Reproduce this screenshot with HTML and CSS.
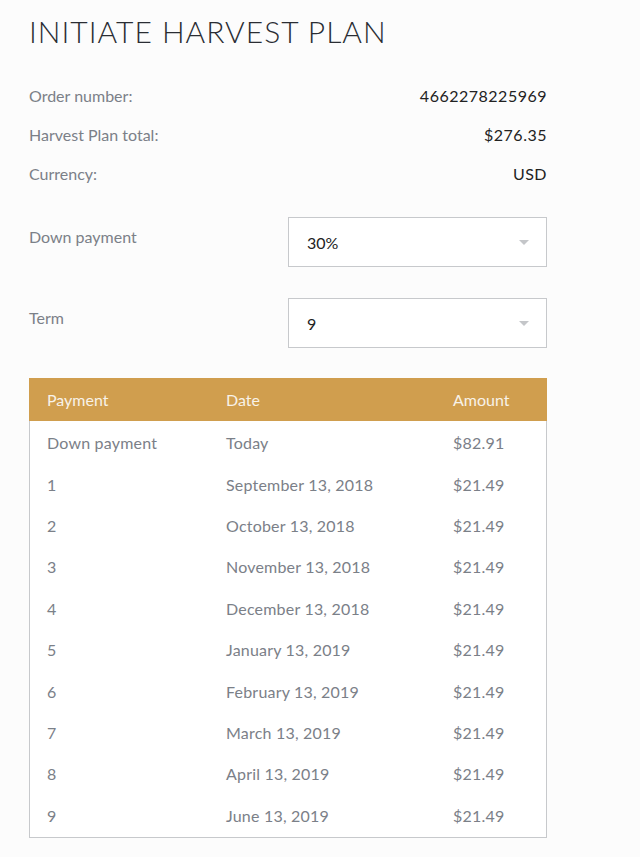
FILE: index.html
```html
<!DOCTYPE html>
<html>
<head>
<meta charset="utf-8">
<link rel="stylesheet" href="styles.css">
</head>
<body>
<div class="page">
  <h1 class="title">INITIATE HARVEST PLAN</h1>
  <div class="info">
    <div class="info-row"><span class="label">Order number:</span><span class="value">4662278225969</span></div>
    <div class="info-row"><span class="label">Harvest Plan total:</span><span class="value">$276.35</span></div>
    <div class="info-row"><span class="label">Currency:</span><span class="value">USD</span></div>
  </div>
  <div class="field first">
    <span class="field-label">Down payment</span>
    <div class="select"><span>30%</span><span class="caret"></span></div>
  </div>
  <div class="field">
    <span class="field-label">Term</span>
    <div class="select"><span>9</span><span class="caret"></span></div>
  </div>
  <div class="table">
    <div class="thead">
      <span class="c1">Payment</span><span class="c2">Date</span><span class="c3">Amount</span>
    </div>
    <div class="tbody">
      <div class="tr"><span class="c1">Down payment</span><span class="c2">Today</span><span class="c3">$82.91</span></div>
      <div class="tr"><span class="c1">1</span><span class="c2">September 13, 2018</span><span class="c3">$21.49</span></div>
      <div class="tr"><span class="c1">2</span><span class="c2">October 13, 2018</span><span class="c3">$21.49</span></div>
      <div class="tr"><span class="c1">3</span><span class="c2">November 13, 2018</span><span class="c3">$21.49</span></div>
      <div class="tr"><span class="c1">4</span><span class="c2">December 13, 2018</span><span class="c3">$21.49</span></div>
      <div class="tr"><span class="c1">5</span><span class="c2">January 13, 2019</span><span class="c3">$21.49</span></div>
      <div class="tr"><span class="c1">6</span><span class="c2">February 13, 2019</span><span class="c3">$21.49</span></div>
      <div class="tr"><span class="c1">7</span><span class="c2">March 13, 2019</span><span class="c3">$21.49</span></div>
      <div class="tr"><span class="c1">8</span><span class="c2">April 13, 2019</span><span class="c3">$21.49</span></div>
      <div class="tr"><span class="c1">9</span><span class="c2">June 13, 2019</span><span class="c3">$21.49</span></div>
    </div>
  </div>
</div>
</body>
</html>
```
FILE: styles.css
```css
html, body {
  margin: 0;
  padding: 0;
  background: #fcfcfc;
}
body {
  font-family: "Lato", "Open Sans", sans-serif;
  color: #222;
}
.page {
  width: 518px;
  padding: 0 0 0 29px;
}
.title {
  margin: 0;
  padding-top: 11px;
  font-size: 30px;
  line-height: 40px;
  font-weight: 300;
  letter-spacing: 1px;
  color: #2a2d33;
}
.info {
  margin-top: 35px;
  display: flex;
  flex-direction: column;
  gap: 19px;
}
.info-row {
  display: flex;
  justify-content: space-between;
  font-size: 16px;
  line-height: 20px;
}
.label {
  color: #7b8088;
}
.value {
  color: #222;
  letter-spacing: 0.5px;
}
.field {
  display: flex;
  justify-content: space-between;
  margin-top: 31px;
}
.field.first {
  margin-top: 33px;
}
.field-label {
  color: #7b8088;
  font-size: 16px;
  line-height: 20px;
  padding-top: 10px;
}
.select {
  box-sizing: border-box;
  width: 259px;
  height: 50px;
  border: 1px solid #c7c9cc;
  background: #fff;
  display: flex;
  align-items: center;
  justify-content: space-between;
  padding: 0 17px 0 18px;
  font-size: 16px;
  color: #222;
}
.caret {
  width: 0;
  height: 0;
  border-left: 5px solid transparent;
  border-right: 5px solid transparent;
  border-top: 5px solid #c4c6c9;
}
.table {
  margin-top: 30px;
  border: 1px solid #c7c9cc;
  border-top: none;
  background: #fff;
  margin-bottom: 20px;
}
.thead {
  display: flex;
  align-items: center;
  height: 43px;
  background: #d09e4e;
  color: #f8f2e8;
  font-size: 16px;
  margin: 0 -1px;
  padding: 0 1px;
}
.tbody {
  padding: 1px 0 1px;
}
.tr {
  display: flex;
  align-items: center;
  height: 41.4px;
  color: #7b8088;
  font-size: 16px;
  letter-spacing: 0.2px;
}
.c1 {
  width: 179px;
  padding-left: 17px;
}
.c2 {
  width: 227px;
}
.c3 {
  flex: 1;
}
```
